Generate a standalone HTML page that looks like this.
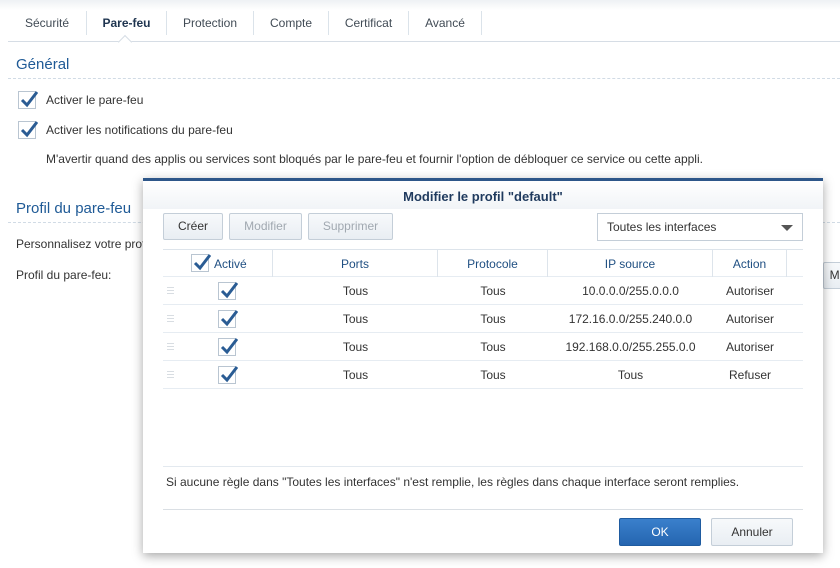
<!DOCTYPE html><html><head><meta charset="utf-8"><style>
*{box-sizing:border-box;margin:0;padding:0}
body{width:840px;height:568px;overflow:hidden;background:#fff;font-family:"Liberation Sans",sans-serif;font-size:12px;color:#333;position:relative}
.a{position:absolute}
.tabs{left:8px;top:10px;height:32px;width:832px;border-bottom:1px solid #d6dde5}
.tab{position:absolute;top:1px;height:24px;line-height:24px;text-align:center;color:#414b55;border-right:1px solid #dbe3ea}
.cb{position:absolute;width:18px;height:18px;border:1px solid #b9c5d1;background:#fff}
.cb svg{position:absolute;left:1px;top:-2px}
.h{color:#1f5a96;font-size:15px}
.dash{border-top:1px dashed #d1dbe5}
.btn{position:absolute;height:27px;line-height:25px;text-align:center;border:1px solid #c4ced8;border-radius:2px;background:linear-gradient(#f7f9fb,#e9eef3);color:#333}
.dis{color:#a0a8b0}
.row{position:absolute;left:163px;width:640px;height:28px;border-bottom:1px solid #e6ecf2;line-height:28px}
.row span{position:absolute;text-align:center}
.dg{position:absolute;left:4px;top:10px;width:7px;height:7px;border-top:1px solid #d8dde2;border-bottom:1px solid #d8dde2}
.dg:after{content:"";position:absolute;left:0;top:2px;width:7px;border-top:1px solid #d8dde2}
</style></head><body>
<div class="a" style="left:0;top:0;width:840px;height:10px;background:linear-gradient(#eef1f4,#fff)"></div>
<div class="a tabs">
<div class="tab" style="left:0;width:79px">Sécurité</div>
<div class="tab" style="left:79px;width:80px;font-weight:bold;color:#1f3550">Pare-feu</div>
<div class="tab" style="left:159px;width:87px">Protection</div>
<div class="tab" style="left:246px;width:75px">Compte</div>
<div class="tab" style="left:321px;width:80px">Certificat</div>
<div class="tab" style="left:401px;width:73px">Avancé</div>
</div>
<div class="a" style="left:120px;top:37px;width:10px;height:10px;background:#fff;border-left:1px solid #d6dde5;border-top:1px solid #d6dde5;transform:rotate(45deg)"></div>
<div class="a h" style="left:16px;top:56px">Général</div>
<div class="a dash" style="left:8px;top:78px;width:832px"></div>
<div class="cb" style="left:18px;top:91px"><svg width="18" height="18" viewBox="0 0 18 18"><path d="M2 10l5 5 10-13" fill="none" stroke="#2a5c94" stroke-width="3"/></svg></div>
<div class="a" style="left:46px;top:93px">Activer le pare-feu</div>
<div class="cb" style="left:18px;top:121px"><svg width="18" height="18" viewBox="0 0 18 18"><path d="M2 10l5 5 10-13" fill="none" stroke="#2a5c94" stroke-width="3"/></svg></div>
<div class="a" style="left:46px;top:123px">Activer les notifications du pare-feu</div>
<div class="a" style="left:46px;top:152px">M'avertir quand des applis ou services sont bloqués par le pare-feu et fournir l'option de débloquer ce service ou cette appli.</div>
<div class="a h" style="left:16px;top:200px">Profil du pare-feu</div>
<div class="a dash" style="left:8px;top:222px;width:832px"></div>
<div class="a" style="left:16px;top:237px">Personnalisez votre profil</div>
<div class="a" style="left:16px;top:268px">Profil du pare-feu:</div>
<div class="btn" style="left:823px;top:262px;width:30px">Mo</div>

<div class="a" style="left:143px;top:178px;width:680px;height:375px;background:#fff;border-top:3px solid #2d5689;box-shadow:0 3px 10px rgba(0,0,0,.35)">
<div class="a" style="left:0;top:0;width:680px;height:28px;background:linear-gradient(#fff,#f1f4f7)"></div>
<div class="a" style="left:0;top:8px;width:680px;text-align:center;font-weight:bold;font-size:13px;color:#1f3a5e">Modifier le profil "default"</div>
</div>
<div class="btn" style="left:163px;top:213px;width:60px">Créer</div>
<div class="btn dis" style="left:229px;top:213px;width:73px">Modifier</div>
<div class="btn dis" style="left:308px;top:213px;width:85px">Supprimer</div>
<div class="a" style="left:597px;top:213px;width:206px;height:28px;border:1px solid #c4ced8;line-height:26px;padding-left:9px;color:#333">Toutes les interfaces<div class="a" style="right:9px;top:11px;border:6px solid transparent;border-top:6px solid #555;border-bottom:0"></div></div>

<div class="row" style="top:249px;height:28px;border-top:1px solid #dde4eb;color:#1f4f82;background:#fff">
<span style="left:0;width:110px;border-right:1px solid #dde4eb;height:27px"></span>
<span style="left:110px;width:165px;border-right:1px solid #dde4eb;height:27px">Ports</span>
<span style="left:275px;width:110px;border-right:1px solid #dde4eb;height:27px">Protocole</span>
<span style="left:385px;width:165px;border-right:1px solid #dde4eb;height:27px">IP source</span>
<span style="left:550px;width:74px;border-right:1px solid #dde4eb;height:27px">Action</span>
<span style="left:51px;text-align:left">Activé</span>
</div>
<div class="cb" style="left:191px;top:254px"><svg width="18" height="18" viewBox="0 0 18 18"><path d="M2 10l5 5 10-13" fill="none" stroke="#2a5c94" stroke-width="3"/></svg></div>

<div class="row" style="top:277px"><i class="dg"></i><span style="left:110px;width:165px">Tous</span><span style="left:275px;width:110px">Tous</span><span style="left:385px;width:165px">10.0.0.0/255.0.0.0</span><span style="left:550px;width:74px">Autoriser</span></div>
<div class="row" style="top:305px"><i class="dg"></i><span style="left:110px;width:165px">Tous</span><span style="left:275px;width:110px">Tous</span><span style="left:385px;width:165px">172.16.0.0/255.240.0.0</span><span style="left:550px;width:74px">Autoriser</span></div>
<div class="row" style="top:333px"><i class="dg"></i><span style="left:110px;width:165px">Tous</span><span style="left:275px;width:110px">Tous</span><span style="left:385px;width:165px">192.168.0.0/255.255.0.0</span><span style="left:550px;width:74px">Autoriser</span></div>
<div class="row" style="top:361px"><i class="dg"></i><span style="left:110px;width:165px">Tous</span><span style="left:275px;width:110px">Tous</span><span style="left:385px;width:165px">Tous</span><span style="left:550px;width:74px">Refuser</span></div>
<div class="cb" style="left:218px;top:282px"><svg width="18" height="18" viewBox="0 0 18 18"><path d="M2 10l5 5 10-13" fill="none" stroke="#2a5c94" stroke-width="3"/></svg></div>
<div class="cb" style="left:218px;top:310px"><svg width="18" height="18" viewBox="0 0 18 18"><path d="M2 10l5 5 10-13" fill="none" stroke="#2a5c94" stroke-width="3"/></svg></div>
<div class="cb" style="left:218px;top:338px"><svg width="18" height="18" viewBox="0 0 18 18"><path d="M2 10l5 5 10-13" fill="none" stroke="#2a5c94" stroke-width="3"/></svg></div>
<div class="cb" style="left:218px;top:366px"><svg width="18" height="18" viewBox="0 0 18 18"><path d="M2 10l5 5 10-13" fill="none" stroke="#2a5c94" stroke-width="3"/></svg></div>

<div class="a" style="left:163px;top:466px;width:640px;border-top:1px solid #e3e9ef"></div>
<div class="a" style="left:166px;top:475px">Si aucune règle dans "Toutes les interfaces" n'est remplie, les règles dans chaque interface seront remplies.</div>
<div class="a" style="left:163px;top:509px;width:640px;border-top:1px solid #dadfe4"></div>
<div class="btn" style="left:619px;top:518px;width:82px;height:28px;line-height:26px;background:linear-gradient(#3a80cc,#2565b0);border-color:#1f5ba0;color:#fff">OK</div>
<div class="btn" style="left:711px;top:518px;width:82px;height:28px;line-height:26px">Annuler</div>
</body></html>
